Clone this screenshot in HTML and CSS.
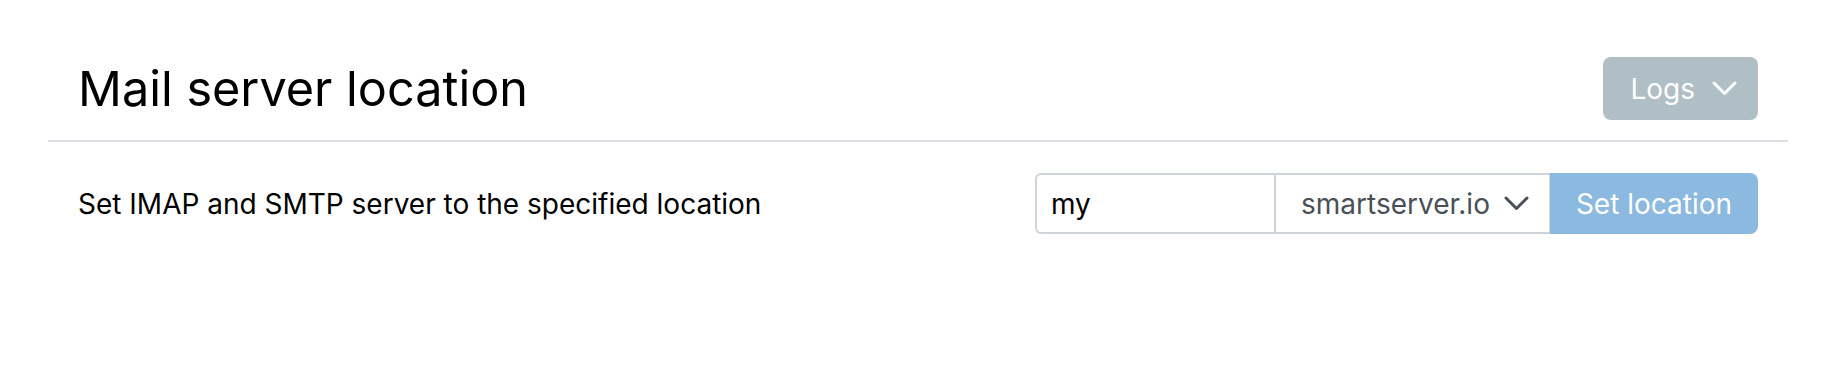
FILE: index.html
```html
<!DOCTYPE html>
<html lang="en">
<head>
  <meta charset="UTF-8" />
  <title>Mail server location</title>
  <link rel="stylesheet" href="styles.css">
</head>
<body>
  <div class="card">
    <div class="card-header">
      <h1 class="title">Mail server location</h1>
      <button class="logs-btn">
        Logs
        <svg class="chev" width="25" height="15" viewBox="0 0 25 15">
          <polyline points="2,2 12.5,12.5 23,2" fill="none" stroke="#fff" stroke-width="3" stroke-linecap="round" stroke-linejoin="round" />
        </svg>
      </button>
    </div>
    <div class="card-row">
      <span class="row-label">Set IMAP and SMTP server to the specified location</span>
      <div class="input-group">
        <input class="host-input" type="text" value="my">
        <div class="domain-select">
          <span>smartserver.io</span>
          <svg class="chev" width="25" height="15" viewBox="0 0 25 15">
            <polyline points="2,2 12.5,12.5 23,2" fill="none" stroke="#495057" stroke-width="3" stroke-linecap="round" stroke-linejoin="round" />
          </svg>
        </div>
        <button class="set-btn">Set location</button>
      </div>
    </div>
  </div>
</body>
</html>
```

FILE: styles.css
```css
body {
  margin: 0;
  background: #fff;
  font-family: Inter, "Noto Sans", sans-serif;
  color: #000;
}

.card {
  margin: 0 48px;
}

.card-header {
  display: flex;
  justify-content: space-between;
  align-items: center;
  padding: 57px 30px 20px;
  border-bottom: 2px solid #dde1e7;
}

.title {
  margin: 0;
  font-size: 48.6px;
  font-weight: 400;
  line-height: 63px;
}

.logs-btn {
  display: flex;
  align-items: center;
  gap: 17px;
  height: 63px;
  padding: 0 21px 0 27px;
  border: none;
  border-radius: 8px;
  background-color: #b0bec5;
  color: #fff;
  font-family: inherit;
  font-size: 28px;
}

.card-row {
  display: flex;
  justify-content: space-between;
  align-items: center;
  padding: 31px 30px;
}

.row-label {
  font-size: 28px;
}

.input-group {
  display: flex;
  height: 61px;
}

.host-input {
  box-sizing: border-box;
  width: 241px;
  height: 61px;
  margin: 0;
  padding: 0 14px;
  border: 2px solid #cfd4da;
  border-radius: 6px 0 0 6px;
  font-family: inherit;
  font-size: 28px;
  color: #000;
  outline: none;
}

.domain-select {
  box-sizing: border-box;
  display: flex;
  align-items: center;
  gap: 14px;
  width: 277px;
  height: 61px;
  padding: 0 20px 0 25px;
  margin-left: -2px;
  border: 2px solid #cfd4da;
  font-size: 28px;
  color: #495057;
}

.set-btn {
  width: 208px;
  height: 61px;
  margin-left: -1px;
  border: none;
  border-radius: 0 8px 8px 0;
  background-color: #8cb9df;
  color: #fff;
  font-family: inherit;
  font-size: 28px;
}
```
